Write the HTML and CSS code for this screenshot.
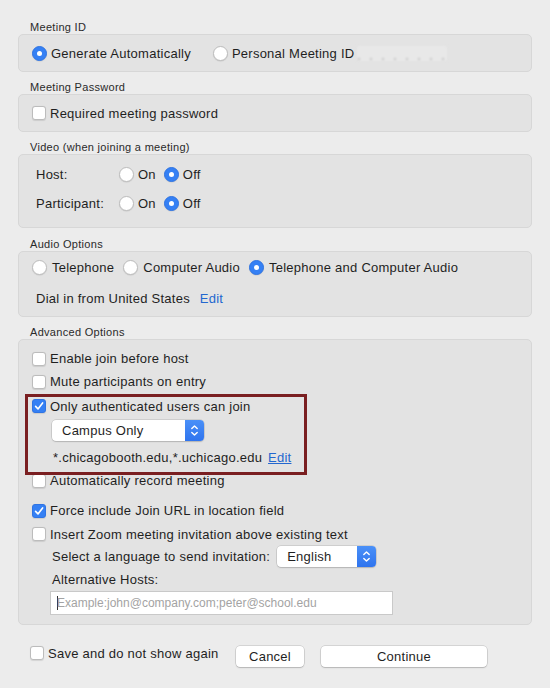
FILE: index.html
```html
<!DOCTYPE html>
<html lang="en">
<head>
<meta charset="utf-8">
<title>Meeting Settings</title>
<link rel="stylesheet" href="styles.css">
</head>
<body>
<div class="dialog">
  <section class="group">
    <div class="group-title">Meeting ID</div>
    <div class="panel panel-row panel-id">
      <label class="opt"><span class="radio on"></span>Generate Automatically</label>
      <label class="opt"><span class="radio"></span>Personal Meeting ID<span class="blurred"></span></label>
    </div>
  </section>

  <section class="group">
    <div class="group-title">Meeting Password</div>
    <div class="panel panel-row panel-pw">
      <label class="opt"><span class="check"></span>Required meeting password</label>
    </div>
  </section>

  <section class="group">
    <div class="group-title">Video (when joining a meeting)</div>
    <div class="panel panel-video">
      <div class="video-row">
        <span class="video-label">Host:</span>
        <label class="opt"><span class="radio"></span>On</label>
        <label class="opt"><span class="radio on"></span>Off</label>
      </div>
      <div class="video-row">
        <span class="video-label">Participant:</span>
        <label class="opt"><span class="radio"></span>On</label>
        <label class="opt"><span class="radio on"></span>Off</label>
      </div>
    </div>
  </section>

  <section class="group group-audio">
    <div class="group-title">Audio Options</div>
    <div class="panel panel-audio">
      <div class="audio-row">
        <label class="opt"><span class="radio"></span>Telephone</label>
        <label class="opt"><span class="radio"></span>Computer Audio</label>
        <label class="opt"><span class="radio on"></span>Telephone and Computer Audio</label>
      </div>
      <div class="dial-row">Dial in from United States <a class="link">Edit</a></div>
    </div>
  </section>

  <section class="group">
    <div class="group-title">Advanced Options</div>
    <div class="panel panel-adv">
      <label class="opt adv-row"><span class="check"></span>Enable join before host</label>
      <label class="opt adv-row"><span class="check"></span>Mute participants on entry</label>
      <label class="opt adv-row adv-auth"><span class="check on"><svg viewBox="0 0 14 14" width="14" height="14"><path d="M3.6 7.4 L6 9.9 L10.6 3.9" fill="none" stroke="#fff" stroke-width="1.6" stroke-linecap="round" stroke-linejoin="round"/></svg></span>Only authenticated users can join</label>
      <div class="indent">
        <div class="select select-campus">
          <span class="select-text">Campus Only</span>
          <span class="select-arrows"><svg viewBox="0 0 19 21" width="19" height="21"><path d="M6.8 8.6 L9.5 5.9 L12.2 8.6 M6.8 12.4 L9.5 15.1 L12.2 12.4" fill="none" stroke="#fff" stroke-width="1.4" stroke-linecap="round" stroke-linejoin="round"/></svg></span>
        </div>
      </div>
      <div class="indent domains">*.chicagobooth.edu,*.uchicago.edu <a class="link underline">Edit</a></div>
      <label class="opt adv-row"><span class="check"></span>Automatically record meeting</label>
      <label class="opt adv-row adv-force"><span class="check on"><svg viewBox="0 0 14 14" width="14" height="14"><path d="M3.6 7.4 L6 9.9 L10.6 3.9" fill="none" stroke="#fff" stroke-width="1.6" stroke-linecap="round" stroke-linejoin="round"/></svg></span>Force include Join URL in location field</label>
      <label class="opt adv-row adv-insert"><span class="check"></span>Insert Zoom meeting invitation above existing text</label>
      <div class="indent lang-row">
        <span>Select a language to send invitation:</span>
        <div class="select select-lang">
          <span class="select-text">English</span>
          <span class="select-arrows"><svg viewBox="0 0 19 21" width="19" height="21"><path d="M6.8 8.6 L9.5 5.9 L12.2 8.6 M6.8 12.4 L9.5 15.1 L12.2 12.4" fill="none" stroke="#fff" stroke-width="1.4" stroke-linecap="round" stroke-linejoin="round"/></svg></span>
        </div>
      </div>
      <div class="indent alt-label">Alternative Hosts:</div>
      <div class="alt-input"><span class="caret"></span><span class="placeholder">Example:john@company.com;peter@school.edu</span></div>
      <div class="highlight"></div>
    </div>
  </section>

  <div class="footer">
    <label class="opt save"><span class="check"></span>Save and do not show again</label>
    <button class="btn btn-cancel">Cancel</button>
    <button class="btn btn-continue">Continue</button>
  </div>
</div>
</body>
</html>
```

FILE: styles.css
```css
* { box-sizing: border-box; }
html, body { margin: 0; padding: 0; }
body {
  width: 550px;
  height: 688px;
  overflow: hidden;
  background: #ececec;
  font-family: "Liberation Sans", Arial, sans-serif;
  font-size: 13px;
  letter-spacing: 0.25px;
  color: #1f1f1f;
}
.dialog { padding: 20px 18px 0; }
.group + .group { margin-top: 8px; }
.group-audio { margin-top: 9px !important; }
.group-title {
  font-size: 11px;
  line-height: 14px;
  letter-spacing: 0.3px;
  padding-left: 12px;
  color: #2a2a2a;
}
.panel {
  position: relative;
  background: #e3e3e3;
  border: 1px solid #d7d7d7;
  border-radius: 5px;
}
.panel-row {
  display: flex;
  align-items: center;
  padding: 0 13px;
}
.panel-id { height: 38px; gap: 22px; }
.panel-pw { height: 38px; }

.opt {
  display: flex;
  align-items: center;
  white-space: nowrap;
}
.radio {
  flex: none;
  width: 15px;
  height: 15px;
  border-radius: 50%;
  background: #fff;
  border: 1px solid #bdbdbd;
  box-shadow: 0 0.5px 1px rgba(0,0,0,0.12);
  margin-right: 4px;
  display: flex;
  align-items: center;
  justify-content: center;
}
.radio.on {
  background: #3580f4;
  border-color: #2f74e4;
}
.radio.on::after {
  content: "";
  width: 5px;
  height: 5px;
  border-radius: 50%;
  background: #fff;
}
.check {
  flex: none;
  width: 14px;
  height: 14px;
  border-radius: 3px;
  background: #fff;
  border: 1px solid #bcbcbc;
  box-shadow: 0 0.5px 1px rgba(0,0,0,0.1);
  margin-right: 4px;
  display: flex;
}
.check.on {
  background: #3580f4;
  border-color: #2f74e4;
}
.check.on svg { margin: -1px; }

.blurred {
  width: 90px;
  height: 15px;
  margin-left: 3px;
  background: #e8e8e8;
  border-radius: 2px;
  filter: blur(1px);
  background-image: radial-gradient(circle, #c4c4c4 0.8px, transparent 1.2px);
  background-size: 12px 4px;
  background-position: 8px 11px;
  background-repeat: repeat-x;
}

.panel-video { height: 74px; padding: 5px 0 0 17px; }
.video-row {
  display: flex;
  align-items: center;
  height: 29px;
}
.video-label { width: 83px; }
.video-row .opt + .opt { margin-left: 8px; }

.panel-audio { height: 66px; padding: 3px 0 0 13px; }
.audio-row {
  display: flex;
  align-items: center;
  gap: 9px;
  height: 24px;
}
.audio-row .radio { margin-right: 5px; }
.dial-row {
  margin-top: 8px;
  height: 24px;
  line-height: 24px;
  padding-left: 4px;
}
.link { color: #2367cf; margin-left: 6px; }
.underline { text-decoration: underline; }

.panel-adv { height: 286px; padding: 7px 0 0 13px; }
.adv-row { height: 23px; }
.adv-auth { height: 25px; padding-top: 1px; }
.adv-force { margin-top: 7px; }
.adv-insert { height: 24px; }
.indent { padding-left: 20px; }

.select {
  display: flex;
  height: 21px;
  background: #fff;
  border-radius: 4px;
  box-shadow: 0 0 0 0.5px rgba(0,0,0,0.18), 0 1px 1.5px rgba(0,0,0,0.12);
  overflow: hidden;
}
.select-text {
  flex: 1;
  line-height: 21px;
  padding-left: 10px;
  font-size: 13px;
}
.select-arrows {
  flex: none;
  width: 19px;
  height: 21px;
  background: linear-gradient(#4a90f8, #2f74ee);
}
.select-arrows svg { display: block; }
.select-campus { width: 152px; margin-top: 2px; }
.domains {
  margin-top: 6px;
  height: 22px;
  line-height: 22px;
  padding-left: 21px;
}
.domains .link { margin-left: 2px; }

.lang-row {
  display: flex;
  align-items: center;
  height: 21px;
}
.select-lang { width: 99px; margin-left: 7px; }
.alt-label {
  margin-top: 2px;
  height: 22px;
  line-height: 22px;
}
.alt-input {
  margin-left: 18px;
  width: 343px;
  height: 24px;
  background: #fff;
  border: 1px solid #c9c9c9;
  display: flex;
  align-items: center;
  padding-left: 6px;
}
.caret {
  width: 1px;
  height: 14px;
  background: #333;
  margin-right: -1px;
}
.placeholder {
  font-size: 12px;
  letter-spacing: 0;
  color: #a3a3a3;
}
.highlight {
  position: absolute;
  left: 6px;
  top: 54px;
  width: 282px;
  height: 81px;
  border: 3px solid #7a1f21;
  pointer-events: none;
}

.footer {
  display: flex;
  align-items: center;
  margin-top: 21px;
  padding-left: 12px;
  height: 21px;
}
.save { width: 206px; margin-bottom: 7px; }
.btn {
  height: 21px;
  padding: 0;
  background: #fff;
  border: none;
  border-radius: 4px;
  box-shadow: 0 0 0 0.5px rgba(0,0,0,0.2), 0 1px 1.5px rgba(0,0,0,0.15);
  font-family: inherit;
  font-size: 13px;
  letter-spacing: 0.25px;
  color: #1f1f1f;
}
.btn-cancel { width: 68px; }
.btn-continue { width: 166px; margin-left: 17px; }
```
